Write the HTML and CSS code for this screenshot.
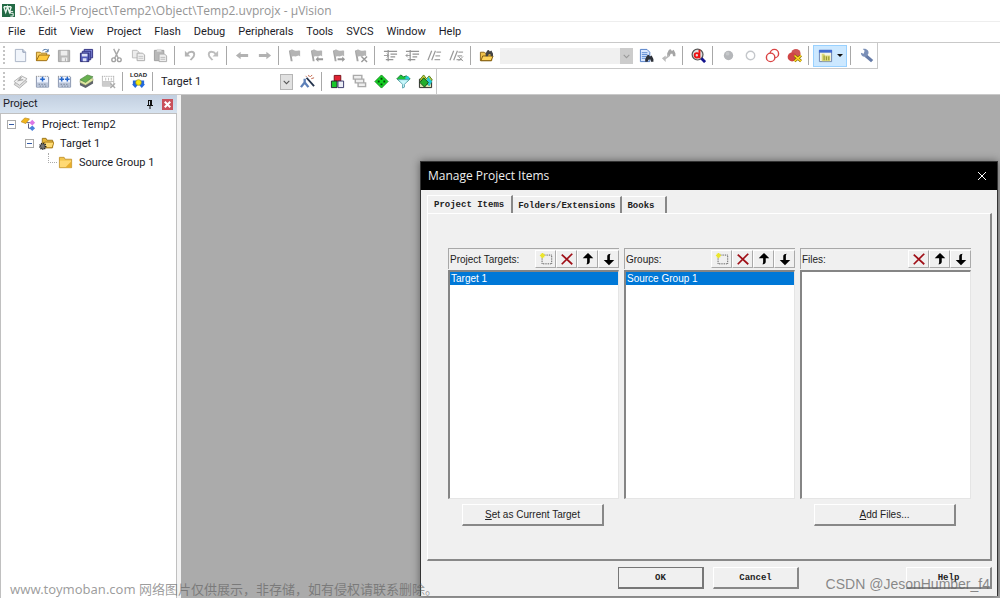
FILE: index.html
```html
<!DOCTYPE html>
<html lang="en">
<head>
<meta charset="utf-8">
<title>D:\Keil-5 Project\Temp2\Object\Temp2.uvprojx - µVision</title>
<link rel="stylesheet" href="styles.css">
</head>
<body>
<svg class="sprite" aria-hidden="true">
  <symbol id="new" viewBox="0 0 16 16"><path d="M2.500 1.500h8l3 3v10h-11z" fill="#f1f5fb" stroke="#a9b2c4"/><path d="M10.500 1.500v3h3" fill="#d5dded" stroke="#8a96ae"/></symbol>
  <symbol id="open" viewBox="0 0 16 16"><path d="M1.500 13.500v-9h4l1 1h6v3" fill="#f7cf62" stroke="#a87a1c"/><path d="M1.500 13.500l3-6h11l-3 6z" fill="#ffc93d" stroke="#9a6b12"/><path d="M8 3c2-2 4-2 6 0m0-2v3h-3" fill="none" stroke="#3f699b"/></symbol>
  <symbol id="save" viewBox="0 0 16 16"><path d="M1.500 2.500h12v12h-12z" fill="#b9b9b9" stroke="#a2a2a2"/><path d="M4 3h7v5H4zM5 10h6v4H5z" fill="#ededed"/><path d="M9 11v3" stroke="#aaa"/></symbol>
  <symbol id="saveall" viewBox="0 0 16 16"><path d="M5.500 1.500h9v9h-9z" fill="#8088d8" stroke="#303080"/><path d="M3.500 3.500h9v9h-9z" fill="#727bd0" stroke="#303080"/><path d="M1.500 5.500h9v9h-9z" fill="#5059b8" stroke="#29296f"/><path d="M3 6h6v3H3zM4 11h4v3H4z" fill="#dce0f8"/></symbol>
  <symbol id="cut" viewBox="0 0 16 16"><path d="M5 1l5 10M11 1L6 11" stroke="#a8a8a8" stroke-width="1.500"/><circle cx="5" cy="12.500" r="2" fill="none" stroke="#a2a2a2" stroke-width="1.500"/><circle cx="11" cy="12.500" r="2" fill="none" stroke="#a2a2a2" stroke-width="1.500"/></symbol>
  <symbol id="copy" viewBox="0 0 16 16"><path d="M1.500 2.500h5l2 2v6h-7z" fill="#ececec" stroke="#bbb"/><path d="M6.500 5.500h6l2 2v6h-8z" fill="#eee" stroke="#aaa"/><path d="M8 9h5M8 11h5" stroke="#c5c5c5"/></symbol>
  <symbol id="paste" viewBox="0 0 16 16"><path d="M1.500 2.500h10v11h-10z" fill="#b8b8b8" stroke="#9d9d9d"/><path d="M4 1h5v3H4z" fill="#ddd"/><path d="M6.500 6.500h6l2 2v6h-8z" fill="#ededed" stroke="#aaa"/><path d="M8 10h5M8 12h5" stroke="#bbb"/></symbol>
  <symbol id="undo" viewBox="0 0 16 16"><path d="M4 7c3-4 8-4 8 0 0 3-3 4-4 6" fill="none" stroke="#b4b4b4" stroke-width="2"/><path d="M2 3v6h6z" fill="#b4b4b4"/></symbol>
  <symbol id="redo" viewBox="0 0 16 16"><path d="M12 7c-3-4-8-4-8 0 0 3 3 4 4 6" fill="none" stroke="#bdbdbd" stroke-width="2"/><path d="M14 3v6H8z" fill="#bdbdbd"/></symbol>
  <symbol id="back" viewBox="0 0 16 16"><path d="M1 8l5-4v2.500h8v3H6V12z" fill="#b2b2b2"/></symbol>
  <symbol id="fwd" viewBox="0 0 16 16"><path d="M15 8l-5-4v2.500H2v3h8V12z" fill="#b2b2b2"/></symbol>
  <symbol id="flag" viewBox="0 0 16 16"><path d="M2 3l2-1 2 12H4z" fill="#a5a5a5"/><path d="M3 3c3-3 4 0 6 0s3-1 5 0v6c-2-2-3 0-5 0s-3-1-4 1z" fill="#b4b4b4"/></symbol>
  <symbol id="fprev" viewBox="0 0 16 16"><use href="#flag"/><path d="M7 12l3-3v2h5v2h-5v2z" fill="#999"/></symbol>
  <symbol id="fnext" viewBox="0 0 16 16"><use href="#flag"/><path d="M15 12l-3-3v2H7v2h5v2z" fill="#999"/></symbol>
  <symbol id="fclear" viewBox="0 0 16 16"><use href="#flag"/><path d="M9 9l6 6m0-6l-6 6" stroke="#999" stroke-width="1.500"/></symbol>
  <symbol id="indent" viewBox="0 0 16 16"><path d="M1 3.500h14M8 6.500h7M8 9.500h5M3 12.500h8M5.500 2v12" stroke="#959595" stroke-width="1.300"/><path d="M1 8h5M4 6l2 2-2 2" fill="none" stroke="#999"/></symbol>
  <symbol id="outdent" viewBox="0 0 16 16"><path d="M1 3.500h14M8 6.500h7M8 9.500h5M3 12.500h8M5.500 2v12" stroke="#959595" stroke-width="1.300"/><path d="M1 8h5M3 6L1 8l2 2" fill="none" stroke="#999"/></symbol>
  <symbol id="comment" viewBox="0 0 16 16"><path d="M1 13L5 3M5 13L9 3" stroke="#999" stroke-width="1.300"/><path d="M10 4.500h5M9 8.500h5M8 12.500h6" stroke="#a5a5a5" stroke-width="1.300"/></symbol>
  <symbol id="uncomment" viewBox="0 0 16 16"><use href="#comment"/><path d="M10 9l5 5m0-5l-5 5" stroke="#999"/></symbol>
  <symbol id="binoc" viewBox="0 0 16 16"><path d="M4 3l3-1 2 3 3-2 3 6v5h-4l-1-4H7l-2 4H1V9z" fill="currentColor"/></symbol>
  <symbol id="findfiles" viewBox="0 0 16 16"><path d="M1.500 13.500v-9h4l1 1h7v8z" fill="#f0c24c" stroke="#8c6416"/><path d="M2 13.500l2-5h11l-2 5z" fill="#ffd45a" stroke="#7e5910"/><use href="#binoc" x="6" y="1" width="10" height="9" color="#444"/></symbol>
  <symbol id="find" viewBox="0 0 16 16"><path d="M1.500 1.500h7l3 3v10h-10z" fill="#dbe8ff" stroke="#4f7dc8"/><path d="M3 5h6M3 7h6M3 9h5M3 11h4" stroke="#5a89d3"/><use href="#binoc" x="6" y="6" width="10" height="10" color="#2d3138"/></symbol>
  <symbol id="incfind" viewBox="0 0 16 16"><use href="#binoc" x="6" y="0" width="10" height="10" color="#a5a5a5"/><path d="M8 7L5 10v-2l-4 3 4 4v-3l4-3z" fill="#bbb"/></symbol>
  <symbol id="debug" viewBox="0 0 16 16"><circle cx="7" cy="7" r="5.800" fill="#ddd" stroke="#555" stroke-width="1.300"/><path d="M11 11l4 4" stroke="#14148e" stroke-width="3"/><circle cx="6.200" cy="7.800" r="2.300" fill="none" stroke="#f01010" stroke-width="2"/><path d="M9 2v9" stroke="#f01010" stroke-width="2"/></symbol>
  <symbol id="bp" viewBox="0 0 16 16"><circle cx="8" cy="8" r="5" fill="#b5b7ba"/><circle cx="7" cy="6" r="2" fill="#c6c8ca"/></symbol>
  <symbol id="bpoff" viewBox="0 0 16 16"><circle cx="8" cy="8" r="4.500" fill="#fff" stroke="#c4c7cb" stroke-width="1.500"/></symbol>
  <symbol id="bpdis" viewBox="0 0 16 16"><circle cx="10" cy="6" r="4.500" fill="#fff" stroke="#da4444" stroke-width="1.500"/><circle cx="6" cy="10" r="4.500" fill="#fff" stroke="#da4444" stroke-width="1.500"/></symbol>
  <symbol id="bpkill" viewBox="0 0 16 16"><circle cx="9.500" cy="6" r="5" fill="#cf5555"/><circle cx="5.500" cy="9.500" r="4.800" fill="#d04545"/><path d="M8 8l7 6m0-6l-7 6" stroke="#806900" stroke-width="3"/><path d="M8 8l7 6m0-6l-7 6" stroke="#ffd820" stroke-width="1.600"/></symbol>
  <symbol id="window" viewBox="0 0 16 16"><path d="M1.500 2.500h13v12h-13z" fill="#f5f5e6" stroke="#6a80ad"/><path d="M1 2h14v3H1z" fill="#416bd0"/><path d="M4 6h3v2h6v6H4z" fill="#dcd978"/><path d="M6.500 8v5M9 9v4M11.500 9v4" stroke="#8c8c2a"/></symbol>
  <symbol id="wrench" viewBox="0 0 16 16"><path d="M7 8l7 6" stroke="#667ca8" stroke-width="3.500"/><path d="M2 5l3 1 1-3-2-2c4-1 7 2 6 5L8 9c-4 1-6-1-6-4z" fill="#7b90b8"/></symbol>
  <symbol id="translate" viewBox="0 0 16 16"><path d="M1 11l8-6 6 3-8 7z" fill="#ddd" stroke="#b0b0b0"/><path d="M1 8l8-6 6 3-8 7z" fill="#f0f0f0" stroke="#b0b0b0"/><path d="M9 3L6 7l5-1" fill="none" stroke="#aaa" stroke-width="1.500"/></symbol>
  <symbol id="buildbase" viewBox="0 0 16 16"><path d="M1.500 3v11h13V3" fill="#edf3ff" stroke="#8290aa"/><path d="M1 2.500h14" stroke="#777" stroke-dasharray="1 1"/><path d="M2 9h12v5H2z" fill="#bac5d9"/><path d="M4 11h1m2 0h1m2 0h1M5 13h1m2 0h1m2 0h1" stroke="#59657b"/></symbol>
  <symbol id="build" viewBox="0 0 16 16"><use href="#buildbase"/><path d="M8 3v5M5.500 5.500h5" stroke="#2466ca" stroke-width="1.600"/></symbol>
  <symbol id="rebuild" viewBox="0 0 16 16"><use href="#buildbase"/><path d="M5 3v5M2.500 5.500h5M11 3v5M8.500 5.500h5" stroke="#2466ca" stroke-width="1.600"/></symbol>
  <symbol id="batch" viewBox="0 0 16 16"><path d="M1 9l9-3 5 1v3l-8 5-6-3z" fill="#5e636b"/><path d="M1 7l9-3 5 1v2l-8 5-6-3z" fill="#dfe7a0" stroke="#8a8f6a" stroke-width=".5"/><path d="M1 6l8-5 6 2-8 6z" fill="#68b04f" stroke="#4d7f43" stroke-width=".7"/></symbol>
  <symbol id="stop" viewBox="0 0 16 16"><path d="M1.500 3v10h12V3M2 8h12M2 11h9M5 4v3m3-3v3m3-3v3" fill="none" stroke="#c0c0c0"/><path d="M1 2.500h14" stroke="#999" stroke-dasharray="1 1"/><path d="M2 8h9v5H2z" fill="#ccc"/><path d="M10 10l5 5m0-5l-5 5" stroke="#aaa" stroke-width="1.500"/></symbol>
  <symbol id="load" viewBox="0 0 16 16"><path d="M2 7h4v4h2l-3.500 4L1 11h1zM10 7h4v4h1l-3.500 4L8 11h2z" fill="#2369dc"/><path d="M4 8h8v2H4z" fill="#2369dc"/><circle cx="8" cy="9" r="3" fill="#f6ea13" stroke="#958d13" stroke-width=".7"/></symbol>
  <symbol id="wand" viewBox="0 0 16 16"><path d="M7 4l8 9" stroke="#24334d" stroke-width="2"/><path d="M9 1l1 2M13 1l-2 2M15 4l-3 1M6 2l1 1" stroke="#bd5d40"/><path d="M5 5v4L1 14m4-5l4 5" fill="none" stroke="#5d80b8" stroke-width="2.500"/></symbol>
  <symbol id="blocks" viewBox="0 0 16 16"><path d="M4.500 1.500h7v6h-7z" fill="#e02232" stroke="#771018"/><path d="M1.500 7.500h6v7h-6z" fill="#16c82a" stroke="#223"/><path d="M8.500 7.500h6v7h-6z" fill="#eceef5" stroke="#333366"/></symbol>
  <symbol id="multi" viewBox="0 0 16 16"><path d="M1.500 1.500h9v4h-9zM3.500 5.500h9v4h-9zM6.500 9.500h8v4h-8z" fill="#eee" stroke="#aaa" stroke-width="1.500"/></symbol>
  <symbol id="rte" viewBox="0 0 16 16"><path d="M8 1l7 7-7 7-7-7z" fill="#12d322" stroke="#128a1c"/><path d="M7 4h2v2H7zM4 7h2v2H4zM10 7h2v2h-2zM7 10h2v2H7z" fill="#07430a"/></symbol>
  <symbol id="filter" viewBox="0 0 16 16"><path d="M1 5l4-4 3 2 3-1 4 3-3 3H4z" fill="#1cc636" stroke="#147330"/><path d="M10 3l3-1 2 4h-5z" fill="#25cbd7"/><path d="M2 6h12l-5 5v3l-2 1v-4z" fill="#c9f8fc" stroke="#5ba5b0"/></symbol>
  <symbol id="pack" viewBox="0 0 16 16"><path d="M1.500 5.500h13v9h-13z" fill="#d8e8b0" stroke="#222"/><path d="M2 6l4-5 3 4 3-3 3 4-3 6z" fill="#e1d337" stroke="#4c7d18"/><path d="M11 3l4 5-3 5-4-5z" fill="#25cbd7"/><path d="M6 4l5 5-4 5-5-5z" fill="#21ae2c" stroke="#114e15"/></symbol>
  <symbol id="newitem" viewBox="0 0 16 16"><path d="M3.500 3.500h11v10h-11z" fill="none" stroke="#333" stroke-dasharray="1 1"/><path d="M4 1v6M1 4h6M2 2l4 4M6 2L2 6" stroke="#ebe52c" stroke-width="1.300"/></symbol>
  <symbol id="delete" viewBox="0 0 16 16"><path d="M2 3l12 11M14 2L2 14" stroke="#a01018" stroke-width="2"/></symbol>
  <symbol id="up" viewBox="0 0 16 16"><path d="M8 1l6 6h-4v4c0 2-2 3-4 3 1-1 1-2 1-3V7H2z" fill="#000"/></symbol>
  <symbol id="down" viewBox="0 0 16 16"><path d="M8 15L2 9h4V5c0-2 2-3 4-3-1 1-1 2-1 3v4h5z" fill="#000"/></symbol>
  <symbol id="folder" viewBox="0 0 16 16"><path d="M1.500 13.500v-11h5l1 2h7v9z" fill="#f2c54d" stroke="#c59634"/><path d="M2 6h12v7H2z" fill="#ffd974"/><path d="M8 13l6-6v6z" fill="#e9ae2c"/></symbol>
  <symbol id="chev" viewBox="0 0 16 16"><path d="M3 6l5 5 5-5" fill="none" stroke="currentColor" stroke-width="1.800"/></symbol>
</svg>

<header class="titlebar">
  <svg class="logo" viewBox="0 0 14 14"><path d="M0 0h14v14H0z" fill="#236a45"/><path d="M2 3l2 6 2-6 2 6 2-6M2 3h8" fill="none" stroke="#e9f5ed" stroke-width="1.500"/><path d="M12 8H9v2h3v3H9" fill="none" stroke="#fff"/></svg>
  <span>D:\Keil-5 Project\Temp2\Object\Temp2.uvprojx - µVision</span>
</header>
<nav class="menubar">
  <button>File</button><button>Edit</button><button>View</button><button>Project</button><button>Flash</button><button>Debug</button><button>Peripherals</button><button>Tools</button><button>SVCS</button><button>Window</button><button>Help</button>
</nav>
<div class="toolrow toolrow-first">
  <div class="toolbar">
    <button class="tool" aria-label="New"><svg><use href="#new"/></svg></button>
    <button class="tool" aria-label="Open"><svg><use href="#open"/></svg></button>
    <button class="tool" aria-label="Save"><svg><use href="#save"/></svg></button>
    <button class="tool" aria-label="Save all"><svg><use href="#saveall"/></svg></button>
    <i class="sep"></i>
    <button class="tool" aria-label="Cut"><svg><use href="#cut"/></svg></button>
    <button class="tool" aria-label="Copy"><svg><use href="#copy"/></svg></button>
    <button class="tool" aria-label="Paste"><svg><use href="#paste"/></svg></button>
    <i class="sep"></i>
    <button class="tool" aria-label="Undo"><svg><use href="#undo"/></svg></button>
    <button class="tool" aria-label="Redo"><svg><use href="#redo"/></svg></button>
    <i class="sep"></i>
    <button class="tool" aria-label="Back"><svg><use href="#back"/></svg></button>
    <button class="tool" aria-label="Forward"><svg><use href="#fwd"/></svg></button>
    <i class="sep"></i>
    <button class="tool" aria-label="Bookmark"><svg><use href="#flag"/></svg></button>
    <button class="tool" aria-label="Previous bookmark"><svg><use href="#fprev"/></svg></button>
    <button class="tool" aria-label="Next bookmark"><svg><use href="#fnext"/></svg></button>
    <button class="tool" aria-label="Clear bookmarks"><svg><use href="#fclear"/></svg></button>
    <i class="sep"></i>
    <button class="tool" aria-label="Indent"><svg><use href="#indent"/></svg></button>
    <button class="tool" aria-label="Outdent"><svg><use href="#outdent"/></svg></button>
    <button class="tool" aria-label="Comment"><svg><use href="#comment"/></svg></button>
    <button class="tool" aria-label="Uncomment"><svg><use href="#uncomment"/></svg></button>
    <i class="sep"></i>
    <button class="tool" aria-label="Find in files"><svg><use href="#findfiles"/></svg></button>
    <span class="combo combo-find"><select aria-label="Search text" disabled><option></option></select><svg><use href="#chev"/></svg></span>
    <button class="tool" aria-label="Find"><svg><use href="#find"/></svg></button>
    <button class="tool" aria-label="Incremental find"><svg><use href="#incfind"/></svg></button>
    <i class="sep"></i>
    <button class="tool" aria-label="Debug"><svg><use href="#debug"/></svg></button>
    <i class="sep"></i>
    <button class="tool" aria-label="Insert breakpoint"><svg><use href="#bp"/></svg></button>
    <button class="tool" aria-label="Enable breakpoint"><svg><use href="#bpoff"/></svg></button>
    <button class="tool" aria-label="Disable breakpoints"><svg><use href="#bpdis"/></svg></button>
    <button class="tool" aria-label="Kill breakpoints"><svg><use href="#bpkill"/></svg></button>
    <i class="sep"></i>
    <button class="tool tool-active" aria-label="Project window"><svg><use href="#window"/></svg><i class="caret"></i></button>
    <i class="sep"></i>
    <button class="tool" aria-label="Configuration"><svg><use href="#wrench"/></svg></button>
  </div>
</div>
<div class="toolrow">
  <div class="toolbar">
    <button class="tool" aria-label="Translate"><svg><use href="#translate"/></svg></button>
    <button class="tool" aria-label="Build"><svg><use href="#build"/></svg></button>
    <button class="tool" aria-label="Rebuild"><svg><use href="#rebuild"/></svg></button>
    <button class="tool" aria-label="Batch build"><svg><use href="#batch"/></svg></button>
    <button class="tool" aria-label="Stop build"><svg><use href="#stop"/></svg></button>
    <i class="sep"></i>
    <button class="tool" aria-label="Download"><svg><use href="#load"/></svg><span class="load-text">LOAD</span></button>
    <i class="sep"></i>
    <span class="combo combo-target"><select aria-label="Target"><option>Target 1</option></select><svg><use href="#chev"/></svg></span>
    <button class="tool" aria-label="Target options"><svg><use href="#wand"/></svg></button>
    <i class="sep"></i>
    <button class="tool" aria-label="Manage project items"><svg><use href="#blocks"/></svg></button>
    <button class="tool" aria-label="Multi-project"><svg><use href="#multi"/></svg></button>
    <button class="tool" aria-label="Run-time environment"><svg><use href="#rte"/></svg></button>
    <button class="tool" aria-label="Select packs"><svg><use href="#filter"/></svg></button>
    <button class="tool" aria-label="Pack installer"><svg><use href="#pack"/></svg></button>
  </div>
</div>

<div class="workspace">
  <aside class="panel">
    <div class="panel-head">
      <span>Project</span>
      <button class="pin" aria-label="Auto hide"><svg viewBox="0 0 8 10"><path d="M2.500 1v5M1 6.500h6M4 7v3M2 1.500h4" stroke="#111" fill="none"/><path d="M4 1h2v5H4z" fill="#111"/></svg></button>
      <button class="panel-close" aria-label="Close"><svg viewBox="0 0 8 8"><path d="M2 2l4 4M6 2L2 6" stroke="#fff" stroke-width="1.500"/></svg></button>
    </div>
    <ul class="tree">
      <li class="node"><i class="expander"></i><svg class="node-icon" viewBox="0 0 16 16"><path d="M6 6h5M8 7v5h3" fill="none" stroke="#557"/><path d="M0 5l4-4 5 1-4 5z" fill="#f2b51c" stroke="#b88614" stroke-width=".7"/><path d="M9 6l3-3 3 3-3 3z" fill="#dc77e5"/><path d="M9 12l3-3 3 3-3 3z" fill="#4a81db"/></svg>Project: Temp2</li>
      <li class="node node-2"><i class="expander"></i><svg class="node-icon" viewBox="0 0 16 16"><path d="M3.500 12.500v-10h4l1 2h6v8z" fill="#e7b637" stroke="#9c741b"/><path d="M4 12.500l2-6h10l-2 6z" fill="#ffdc74" stroke="#ad7f1c"/><circle cx="4" cy="11" r="3" fill="#777" stroke="#222" stroke-width="2" stroke-dasharray="1 1"/></svg>Target 1</li>
      <li class="node node-3"><i class="branch"></i><svg class="node-icon"><use href="#folder"/></svg>Source Group 1</li>
    </ul>
  </aside>
  <main class="desktop">
    <section class="dialog" role="dialog" aria-labelledby="dialog-title">
      <header class="dialog-head">
        <h1 id="dialog-title">Manage Project Items</h1>
        <button aria-label="Close dialog"><svg viewBox="0 0 10 10"><path d="M1 1l8 8M9 1L1 9" stroke="#fff"/></svg></button>
      </header>
      <div class="dialog-body">
        <div class="tabs" role="tablist">
          <button class="tab tab-on" role="tab" aria-selected="true">Project Items</button>
          <button class="tab" role="tab">Folders/Extensions</button>
          <button class="tab" role="tab">Books</button>
        </div>
        <div class="page" role="tabpanel">
          <section class="column">
            <div class="col-head"><span>Project Targets:</span>
              <button aria-label="New target"><svg><use href="#newitem"/></svg></button>
              <button aria-label="Delete target"><svg><use href="#delete"/></svg></button>
              <button aria-label="Move target up"><svg><use href="#up"/></svg></button>
              <button aria-label="Move target down"><svg><use href="#down"/></svg></button>
            </div>
            <ul class="list"><li>Target 1</li></ul>
            <button class="btn btn-col"><u>S</u>et as Current Target</button>
          </section>
          <section class="column">
            <div class="col-head"><span>Groups:</span>
              <button aria-label="New group"><svg><use href="#newitem"/></svg></button>
              <button aria-label="Delete group"><svg><use href="#delete"/></svg></button>
              <button aria-label="Move group up"><svg><use href="#up"/></svg></button>
              <button aria-label="Move group down"><svg><use href="#down"/></svg></button>
            </div>
            <ul class="list"><li>Source Group 1</li></ul>
          </section>
          <section class="column">
            <div class="col-head"><span>Files:</span>
              <button aria-label="Delete file"><svg><use href="#delete"/></svg></button>
              <button aria-label="Move file up"><svg><use href="#up"/></svg></button>
              <button aria-label="Move file down"><svg><use href="#down"/></svg></button>
            </div>
            <ul class="list"></ul>
            <button class="btn btn-col"><u>A</u>dd Files...</button>
          </section>
        </div>
        <footer class="dialog-foot">
          <span></span>
          <button class="btn btn-default">OK</button>
          <button class="btn">Cancel</button>
          <span></span>
          <button class="btn">Help</button>
        </footer>
      </div>
    </section>
  </main>
</div>
<div class="mark mark-left">www.toymoban.com 网络图片仅供展示，非存储，如有侵权请联系删除。</div>
<div class="mark mark-right">CSDN @JesonHumber_f4</div>
</body>
</html>
```
FILE: styles.css
```css
* { box-sizing: border-box; }
html, body { height: 100%; }
body {
  margin: 0;
  display: flex;
  flex-direction: column;
  position: relative;
  overflow: hidden;
  background: #fff;
  color: #1c1c28;
  font: 11px/16px Roboto, "Open Sans", sans-serif;
}
button {
  margin: 0;
  padding: 0;
  border: 0;
  background: none;
  color: inherit;
  font: inherit;
}
ul { margin: 0; padding: 0; list-style: none; }
.sprite { position: absolute; width: 0; height: 0; }

.titlebar {
  height: 22px;
  flex: none;
  display: flex;
  align-items: center;
  gap: 4px;
  padding-left: 2px;
  border-bottom: 1px solid #eee;
  color: #959595;
  font-family: "Open Sans", sans-serif;
  font-size: 12px;
}
.logo { width: 13px; height: 13px; }
.menubar {
  height: 20px;
  flex: none;
  display: flex;
  align-items: center;
  gap: 13px;
  padding-left: 8px;
}

.toolrow {
  height: 25px;
  flex: none;
  display: flex;
}
.toolrow-first { height: 27px; border-top: 1px solid #c9c9c9; }
.toolrow-first .toolbar { border-bottom: 1px solid #c9c9c9; }
.toolbar {
  display: flex;
  align-items: center;
  padding-left: 9px;
  border-right: 1px solid #c9c9c9;
  background: repeating-linear-gradient(#c4c4c4 0 2px, #fff 2px 4px) 3px 3px / 2px 20px no-repeat;
}
.tool {
  position: relative;
  width: 22px;
  height: 22px;
  display: flex;
  align-items: center;
  justify-content: center;
}
.tool svg { width: 15px; height: 15px; }
.sep {
  width: 8px;
  height: 19px;
  background: linear-gradient(#a8a8a8, #a8a8a8) 3px 0 / 1px 100% no-repeat;
}
.tool-active {
  width: 34px;
  gap: 4px;
  border: 1px solid #99d1ff;
  background: #cce8ff;
}
.caret {
  border: 3px solid transparent;
  border-top-color: #111;
  border-bottom: 0;
}
.load-text {
  position: absolute;
  top: 1px;
  left: 3px;
  font: bold 6px/6px "Liberation Sans", sans-serif;
}
.combo { display: flex; height: 16px; position: relative; }
.combo select {
  flex: 1;
  min-width: 0;
  appearance: none;
  border: 0;
  padding: 0 16px 0 4px;
  background: none;
  color: inherit;
  font: inherit;
}
.combo svg {
  position: absolute;
  right: 0;
  width: 13px;
  height: 16px;
  padding: 1px;
  border: 1px solid #b5b5b5;
  background: #e1e1e1;
  color: #555;
  pointer-events: none;
}
.combo-find { width: 133px; margin: 0 2px 0 3px; background: #f0f0f0; }
.combo-find svg { background: #ccc; border-color: #ccc; color: #999; }
.combo-target { width: 136px; margin-right: 3px; }

.workspace {
  flex: 1;
  min-height: 0;
  display: flex;
  border-top: 1px solid #c9c9c9;
}
.panel {
  width: 181px;
  flex: none;
  display: flex;
  flex-direction: column;
  border-right: 4px solid #f3f3f3;
}
.panel-head {
  height: 18px;
  display: flex;
  align-items: center;
  padding: 0 4px 0 3px;
  background: linear-gradient(#c2cfe0, #d6e2ef);
}
.panel-head span { flex: 1; }
.pin { width: 8px; height: 10px; margin-right: 8px; display: flex; }
.panel-close {
  width: 11px;
  height: 11px;
  display: flex;
  background: #c9505a;
}
.tree {
  flex: 1;
  padding-top: 1px;
  border: 1px solid #c0c0c0;
  border-width: 1px 1px 0;
}
.node {
  height: 19px;
  display: flex;
  align-items: center;
  padding-left: 6px;
}
.node-2 { padding-left: 24px; }
.node-3 { padding-left: 47px; }
.node-icon { width: 15px; height: 15px; margin: 0 6px 0 5px; }
.expander {
  width: 9px;
  height: 9px;
  border: 1px solid #aaa;
  background: linear-gradient(#345aa5, #345aa5) 1px 3px / 5px 1px no-repeat;
}
.branch {
  width: 9px;
  height: 10px;
  align-self: flex-start;
  border: 1px dotted #aaa;
  border-width: 0 0 1px 1px;
  margin-right: -4px;
}

.desktop { flex: 1; position: relative; background: #ababab; }
.dialog {
  position: absolute;
  top: 66px;
  right: 2px;
  bottom: 2px;
  left: 239px;
  display: flex;
  flex-direction: column;
  border: 1px solid #333;
  border-bottom: 0;
  background: #f0f0f0;
  box-shadow: 0 0 8px rgba(0, 0, 0, .45);
}
.dialog-head {
  height: 28px;
  flex: none;
  display: flex;
  align-items: center;
  justify-content: space-between;
  padding: 0 10px 0 7px;
  background: #000;
  color: #eee;
  font-family: "Open Sans", sans-serif;
  font-size: 12px;
}
.dialog-head h1 { margin: 0; font: inherit; }
.dialog-head button { display: flex; }
.dialog-head svg { width: 10px; height: 10px; }
.dialog-body {
  flex: 1;
  display: flex;
  flex-direction: column;
  padding: 5px 5px 7px 6px;
  color: #222;
  font: 10px/13px "Liberation Sans", sans-serif;
}
.tabs {
  display: flex;
  align-items: flex-end;
  font-family: "Liberation Mono", monospace;
}
.tab {
  height: 17px;
  padding: 2px 5px 0;
  border-top: 1px solid #fff;
  border-right: 2px solid #888;
  font-size: 9px;
  font-weight: bold;
}
.tab:last-child { padding-right: 11px; }
.tab-on {
  height: 18px;
  padding: 1px 7px 0 6px;
  border-left: 1px solid #fff;
}
.page {
  flex: 1;
  display: grid;
  grid-template-columns: repeat(3, 1fr);
  gap: 5px;
  padding: 34px 19px 33px 20px;
  border: 1px solid #fff;
  border-right: 2px solid #888;
  border-bottom: 2px solid #888;
}
.column { display: flex; flex-direction: column; }
.col-head {
  height: 21px;
  display: flex;
  align-items: center;
  padding-left: 1px;
  border-top: 1px solid #a8a8a8;
  border-left: 1px solid #a8a8a8;
}
.col-head span { flex: 1; }
.col-head button {
  width: 21px;
  height: 18px;
  display: flex;
  align-items: center;
  justify-content: center;
  border: 1px solid #fff;
  border-right-color: #aaa;
  border-bottom-color: #aaa;
}
.col-head svg { width: 14px; height: 14px; }
.list {
  flex: 1;
  margin: 1px 0 5px;
  border: 2px solid #858585;
  border-right: 1px solid #e5e5e5;
  border-bottom: 1px solid #e5e5e5;
  background: #fff;
}
.list li { padding: 0 1px; background: #0078d7; color: #fff; }
.column:nth-child(2) .list { margin-bottom: 27px; }
.btn {
  width: 86px;
  height: 22px;
  border: 1px solid #fff;
  border-right: 2px solid #888;
  border-bottom: 2px solid #888;
}
.btn-col { width: 142px; margin-left: 14px; }
.dialog-foot {
  display: flex;
  gap: 9px;
  padding-top: 6px;
  font-family: "Liberation Mono", monospace;
}
.dialog-foot span { flex: 184; }
.dialog-foot span ~ span { flex: 90; }
.dialog-foot .btn { padding-top: 2px; font-size: 9px; font-weight: bold; }
.dialog-foot .btn-default { border: 2px solid #777; border-top-width: 1px; border-left-width: 1px; }

.mark { position: absolute; white-space: nowrap; pointer-events: none; }
.mark-left {
  left: 10px;
  bottom: 0;
  color: rgba(90, 90, 90, .6);
  font: 13px/18px "Noto Sans", "Noto Sans CJK SC", sans-serif;
}
.mark-right {
  right: 10px;
  bottom: 5px;
  color: rgba(100, 100, 100, .75);
  font: 14px/18px "Liberation Sans", sans-serif;
}
```
